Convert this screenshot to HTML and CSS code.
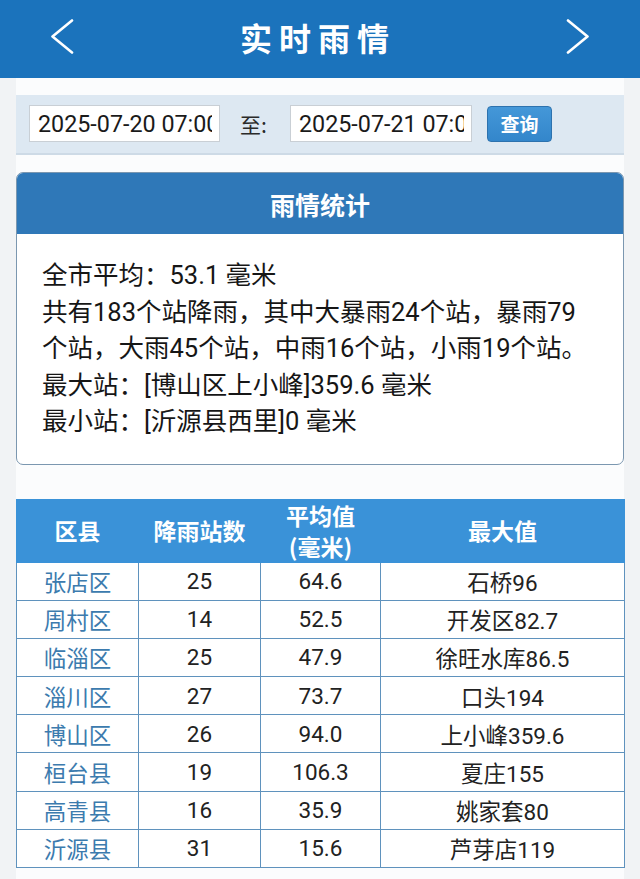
FILE: index.html
```html
<!DOCTYPE html>
<html lang="zh-CN">
<head>
<meta charset="utf-8">
<title>实时雨情</title>
<link rel="stylesheet" href="styles.css">
</head>
<body>
<header class="topbar">
  <svg class="nav-icon" viewBox="0 0 24 36" aria-hidden="true"><polyline points="22,1.5 2.5,17.5 22,33.5"/></svg>
  <h1 class="title">实时雨情</h1>
  <svg class="nav-icon" viewBox="0 0 24 36" aria-hidden="true"><polyline points="2,1.5 21.5,17.5 2,33.5"/></svg>
</header>
<main class="content">
  <div class="query-bar">
    <input class="date-input date-start" type="text" value="2025-07-20 07:00" readonly>
    <span class="to-label">至:</span>
    <input class="date-input date-end" type="text" value="2025-07-21 07:00" readonly>
    <button class="query-btn" type="button">查询</button>
  </div>

  <section class="stats-card">
    <h2 class="card-title">雨情统计</h2>
    <div class="card-body">
      <p>全市平均：53.1 毫米</p>
      <p>共有183个站降雨，其中大暴雨24个站，暴雨79个站，大雨45个站，中雨16个站，小雨19个站。</p>
      <p>最大站：[博山区上小峰]359.6 毫米</p>
      <p>最小站：[沂源县西里]0 毫米</p>
    </div>
  </section>

  <table class="rain-table">
    <colgroup>
      <col class="c1"><col class="c2"><col class="c3"><col class="c4">
    </colgroup>
    <thead>
      <tr><th>区县</th><th>降雨站数</th><th>平均值<br>(毫米)</th><th>最大值</th></tr>
    </thead>
    <tbody>
      <tr><td class="area">张店区</td><td>25</td><td>64.6</td><td>石桥96</td></tr>
      <tr><td class="area">周村区</td><td>14</td><td>52.5</td><td>开发区82.7</td></tr>
      <tr><td class="area">临淄区</td><td>25</td><td>47.9</td><td>徐旺水库86.5</td></tr>
      <tr><td class="area">淄川区</td><td>27</td><td>73.7</td><td>口头194</td></tr>
      <tr><td class="area">博山区</td><td>26</td><td>94.0</td><td>上小峰359.6</td></tr>
      <tr><td class="area">桓台县</td><td>19</td><td>106.3</td><td>夏庄155</td></tr>
      <tr><td class="area">高青县</td><td>16</td><td>35.9</td><td>姚家套80</td></tr>
      <tr><td class="area">沂源县</td><td>31</td><td>15.6</td><td>芦芽店119</td></tr>
    </tbody>
  </table>
</main>
</body>
</html>
```

FILE: styles.css
```css
* { box-sizing: border-box; }

html, body {
  margin: 0;
  padding: 0;
}

body {
  background: #f1f3f5;
  font-family: Roboto, "Noto Sans CJK SC", sans-serif;
  color: #1c1c1c;
  height: 879px;
  overflow: hidden;
}

.topbar {
  height: 78px;
  background: #1b73bc;
  display: flex;
  align-items: center;
  justify-content: space-between;
  padding: 0 50px 4px;
}

.nav-icon {
  width: 24px;
  height: 36px;
  fill: none;
  stroke: #ffffff;
  stroke-width: 2.6;
  stroke-linecap: round;
  stroke-linejoin: round;
}

.title {
  margin: 0 4px 0 0;
  color: #ffffff;
  font-family: "Noto Sans CJK SC", sans-serif;
  font-weight: 700;
  font-size: 32px;
  letter-spacing: 7px;
  line-height: 1;
}

.content {
  margin: 0 16px;
  background: #fbfcfd;
  padding-top: 17px;
  height: 801px;
}

.query-bar {
  height: 60px;
  background: #dde8f2;
  border-bottom: 2px solid #cddae6;
  display: flex;
  align-items: center;
  padding: 0 13px 1px;
}

.date-input {
  height: 37px;
  border: 1px solid #c9cfd5;
  background: #ffffff;
  font-family: Roboto, "Noto Sans CJK SC", sans-serif;
  font-size: 23.3px;
  color: #1a1a1a;
  padding: 0 7px 0 8px;
  outline: none;
  border-radius: 0;
}

.date-start { width: 191px; }
.date-end { width: 182px; }

.to-label {
  font-family: "Noto Sans CJK SC", sans-serif;
  font-size: 21px;
  color: #2a2a2a;
  width: 70px;
  padding-left: 20px;
}

.query-btn {
  margin-left: 15px;
  width: 65px;
  height: 36px;
  border: 1px solid #2d72ae;
  border-radius: 4px;
  background: linear-gradient(#4497d8, #3386cb);
  color: #ffffff;
  font-family: "Noto Sans CJK SC", sans-serif;
  font-weight: 700;
  font-size: 19px;
  padding: 0;
}

.stats-card {
  margin-top: 17px;
  border: 1px solid #7b97b0;
  border-radius: 7px;
  overflow: hidden;
  background: #ffffff;
}

.card-title {
  margin: 0;
  height: 61px;
  background: #2f78b8;
  color: #ffffff;
  font-family: "Noto Sans CJK SC", sans-serif;
  font-weight: 700;
  font-size: 25px;
  display: flex;
  align-items: center;
  justify-content: center;
}

.card-body {
  padding: 23px 29px 24px 25px;
  font-family: Roboto, "Noto Sans CJK SC", sans-serif;
  font-size: 25.5px;
  line-height: 36.5px;
  color: #161616;
}

.card-body p {
  margin: 0;
}

.rain-table {
  margin-top: 34px;
  width: 608px;
  border-collapse: collapse;
  table-layout: fixed;
  background: #ffffff;
  font-family: Roboto, "Noto Sans CJK SC", sans-serif;
}

.c1 { width: 122px; }
.c2 { width: 122px; }
.c3 { width: 120px; }
.c4 { width: 244px; }

.rain-table th {
  height: 63px;
  background: #3a92d8;
  color: #ffffff;
  font-family: "Noto Sans CJK SC", sans-serif;
  font-weight: 700;
  font-size: 23px;
  line-height: 31px;
  padding: 0;
  border: 1px solid #3a92d8;
}

.rain-table td {
  height: 38.2px;
  padding: 0;
  text-align: center;
  font-size: 22.5px;
  color: #222222;
  border: 1.5px solid #5f92bd;
}

.rain-table td.area {
  color: #3c7bae;
}
```
